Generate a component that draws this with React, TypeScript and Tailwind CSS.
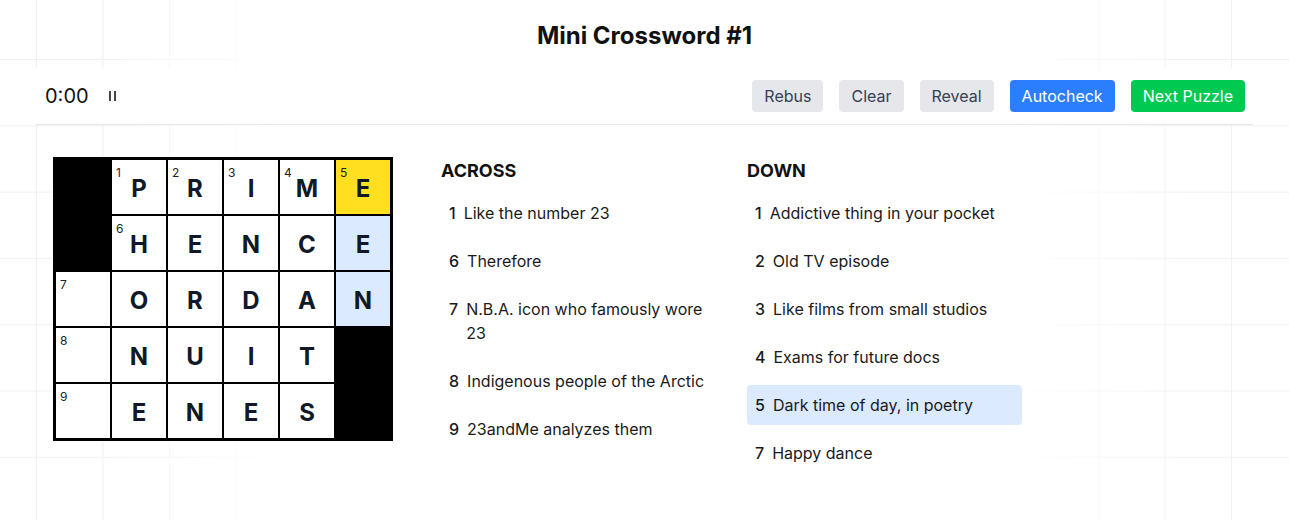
import React from "react";

type Cell = { b?: boolean; n?: number; l?: string; hl?: "y" | "b" };

const grid: Cell[][] = [
  [{ b: true }, { n: 1, l: "P" }, { n: 2, l: "R" }, { n: 3, l: "I" }, { n: 4, l: "M" }, { n: 5, l: "E", hl: "y" }],
  [{ b: true }, { n: 6, l: "H" }, { l: "E" }, { l: "N" }, { l: "C" }, { l: "E", hl: "b" }],
  [{ n: 7 }, { l: "O" }, { l: "R" }, { l: "D" }, { l: "A" }, { l: "N", hl: "b" }],
  [{ n: 8 }, { l: "N" }, { l: "U" }, { l: "I" }, { l: "T" }, { b: true }],
  [{ n: 9 }, { l: "E" }, { l: "N" }, { l: "E" }, { l: "S" }, { b: true }],
];

const across: [number, string][] = [
  [1, "Like the number 23"],
  [6, "Therefore"],
  [7, "N.B.A. icon who famously wore 23"],
  [8, "Indigenous people of the Arctic"],
  [9, "23andMe analyzes them"],
];

const down: [number, string][] = [
  [1, "Addictive thing in your pocket"],
  [2, "Old TV episode"],
  [3, "Like films from small studios"],
  [4, "Exams for future docs"],
  [5, "Dark time of day, in poetry"],
  [7, "Happy dance"],
];

function ClueList({ title, items, active }: { title: string; items: [number, string][]; active?: number }) {
  return (
    <div className="w-[275px]">
      <h2 className="mb-2 text-lg font-bold leading-7 text-[#111]">{title}</h2>
      <ul className="flex flex-col gap-2">
        {items.map(([n, t]) => (
          <li
            key={n}
            className={
              "flex gap-2 rounded px-2 py-2 text-base leading-6 text-[#1a1a1a] " +
              (active === n ? "bg-blue-100" : "")
            }
          >
            <span className="font-medium">{n}</span>
            <span>{t}</span>
          </li>
        ))}
      </ul>
    </div>
  );
}

export default function App() {
  return (
    <div className="relative h-[520px] overflow-hidden bg-white font-['Inter',sans-serif] text-[#111]">
      <div className="pointer-events-none absolute inset-0 bg-[linear-gradient(to_right,#eef0f3_1px,transparent_1px),linear-gradient(to_bottom,#eef0f3_1px,transparent_1px)] [background-size:66.4px_66.3px] [background-position:36px_59px] [mask-image:linear-gradient(to_right,black_0%,black_8%,transparent_22%,transparent_78%,black_92%,black_100%)]" />
      <div className="relative mx-9">
        <h1 className="pt-5 text-center text-2xl font-bold leading-8 text-[#111]">Mini Crossword #1</h1>
        <div className="mt-4 flex items-center justify-between border-b border-gray-200 bg-white px-2 py-3">
          <div className="flex items-center">
            <span className="pl-px text-xl leading-7 text-[#111]">0:00</span>
            <span className="ml-5 flex gap-[3px]">
              <span className="block h-[10px] w-[2px] bg-[#3f4450]" />
              <span className="block h-[10px] w-[2px] bg-[#3f4450]" />
            </span>
          </div>
          <div className="flex gap-4">
            <button className="rounded bg-gray-200 px-3 py-1 text-base leading-6 text-gray-700">Rebus</button>
            <button className="rounded bg-gray-200 px-3 py-1 text-base leading-6 text-gray-700">Clear</button>
            <button className="rounded bg-gray-200 px-3 py-1 text-base leading-6 text-gray-700">Reveal</button>
            <button className="rounded bg-blue-500 px-3 py-1 text-base leading-6 text-white">Autocheck</button>
            <button className="rounded bg-green-500 px-3 py-1 text-base leading-6 text-white">Next Puzzle</button>
          </div>
        </div>
        <div className="flex pl-[17px] pt-8">
          <div className="grid grid-cols-[repeat(6,54px)] grid-rows-[repeat(5,54px)] gap-[2px] self-start border-[3px] border-black bg-black">
            {grid.flat().map((c, i) => (
              <div
                key={i}
                className={
                  "relative flex items-center justify-center " +
                  (c.b ? "bg-black" : c.hl === "y" ? "bg-yellow-300" : c.hl === "b" ? "bg-blue-100" : "bg-white")
                }
              >
                {c.n !== undefined && (
                  <span className="absolute left-[4px] top-[5px] text-xs leading-4 text-[#222]">{c.n}</span>
                )}
                {c.l && <span className="pt-1 text-2xl font-bold leading-8 text-[#111827]">{c.l}</span>}
              </div>
            ))}
          </div>
          <div className="ml-12 flex gap-[31px]">
            <ClueList title="ACROSS" items={across} />
            <ClueList title="DOWN" items={down} active={5} />
          </div>
        </div>
      </div>
    </div>
  );
}
